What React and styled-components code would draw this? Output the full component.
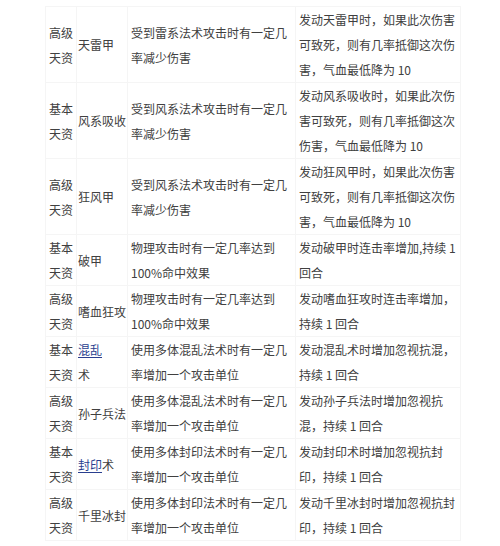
import styled, { createGlobalStyle } from "styled-components";

const GlobalStyle = createGlobalStyle`
  html, body {
    margin: 0;
    padding: 0;
    background: #ffffff;
  }
  body {
    font-family: "Noto Sans CJK SC", "Noto Sans", "Liberation Sans", sans-serif;
  }
`;

const Page = styled.div`
  width: 500px;
  height: 546px;
  overflow: hidden;
  background: #fff;
  padding: 6px 0 0 45px;
  box-sizing: border-box;
`;

const Table = styled.table`
  border-collapse: collapse;
  table-layout: fixed;
  width: 415px;
  font-size: 12px;
  line-height: 25px;
  color: #404040;
`;

const Cell = styled.td`
  border: 1px solid #f5f5f5;
  padding: 0 ${(p) => (p.$tight ? "1px" : "1px 0 3px")};
  vertical-align: middle;
  line-break: strict;
`;

const Link = styled.span`
  color: #2a3f8f;
  text-decoration: underline;
  text-underline-offset: 2px;
`;

const rows = [
  { level: "高级天资", name: "天雷甲", desc: "受到雷系法术攻击时有一定几率减少伤害", effect: "发动天雷甲时，如果此次伤害可致死，则有几率抵御这次伤害，气血最低降为 10" },
  { level: "基本天资", name: "风系吸收", desc: "受到风系法术攻击时有一定几率减少伤害", effect: "发动风系吸收时，如果此次伤害可致死，则有几率抵御这次伤害，气血最低降为 10" },
  { level: "高级天资", name: "狂风甲", desc: "受到风系法术攻击时有一定几率减少伤害", effect: "发动狂风甲时，如果此次伤害可致死，则有几率抵御这次伤害，气血最低降为 10" },
  { level: "基本天资", name: "破甲", desc: "物理攻击时有一定几率达到100%命中效果", effect: "发动破甲时连击率增加,持续 1 回合" },
  { level: "高级天资", name: "嗜血狂攻", desc: "物理攻击时有一定几率达到100%命中效果", effect: "发动嗜血狂攻时连击率增加，持续 1 回合" },
  { level: "基本天资", name: <><Link>混乱</Link><br />术</>, desc: "使用多体混乱法术时有一定几率增加一个攻击单位", effect: "发动混乱术时增加忽视抗混，持续 1 回合" },
  { level: "高级天资", name: "孙子兵法", desc: "使用多体混乱法术时有一定几率增加一个攻击单位", effect: "发动孙子兵法时增加忽视抗混，持续 1 回合" },
  { level: "基本天资", name: <><Link>封印</Link>术</>, desc: "使用多体封印法术时有一定几率增加一个攻击单位", effect: "发动封印术时增加忽视抗封印，持续 1 回合" },
  { level: "高级天资", name: "千里冰封", desc: "使用多体封印法术时有一定几率增加一个攻击单位", effect: "发动千里冰封时增加忽视抗封印，持续 1 回合" },
];

export default function App() {
  return (
    <>
      <GlobalStyle />
      <Page>
        <Table>
          <colgroup>
            <col style={{ width: 31 }} />
            <col style={{ width: 51 }} />
            <col style={{ width: 168 }} />
            <col style={{ width: 165 }} />
          </colgroup>
          <tbody>
            {rows.map((r, i) => (
              <tr key={i}>
                <Cell>{r.level}</Cell>
                <Cell $tight>{r.name}</Cell>
                <Cell>{r.desc}</Cell>
                <Cell>{r.effect}</Cell>
              </tr>
            ))}
          </tbody>
        </Table>
      </Page>
    </>
  );
}
